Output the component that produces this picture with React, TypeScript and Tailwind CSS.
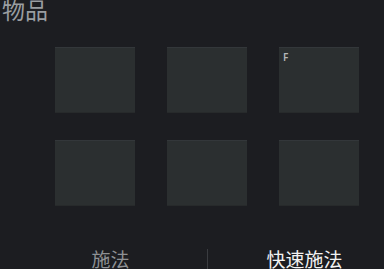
export default function App() {
  const slots = ['', '', 'F', '', '', ''];
  return (
    <div
      className="w-[384px] h-[269px] bg-[#1c1d21] overflow-hidden relative"
      style={{ fontFamily: '"Noto Sans", "Noto Sans CJK SC", sans-serif' }}
    >
      <h2 className="text-[23px] leading-[22px] text-[#9a9ea1] pl-[2px] -mt-[1px]">物品</h2>

      <div className="grid grid-cols-[80px_80px_80px] gap-x-[32px] gap-y-[27px] pl-[55px] mt-[26px]">
        {slots.map((key, i) => (
          <div
            key={i}
            className="h-[66px] bg-[#2b2f30] border-t border-t-[#33373a] border-b border-b-[#272a2b] relative"
          >
            {key && (
              <span className="absolute left-[4px] top-[4px] text-[10px] leading-none font-semibold text-[#b4b7b9]">
                {key}
              </span>
            )}
          </div>
        ))}
      </div>

      <div className="flex items-start pl-[14px] mt-[41px]">
        <div className="w-[193px] shrink-0 text-center text-[19px] leading-[26px] text-[#8e9194]">施法</div>
        <div className="w-px h-[22px] shrink-0 bg-[#3a3c40] mt-[2px]" />
        <div className="w-[193px] shrink-0 text-center text-[19px] leading-[26px] text-[#f2f2f2]">快速施法</div>
      </div>
    </div>
  );
}
